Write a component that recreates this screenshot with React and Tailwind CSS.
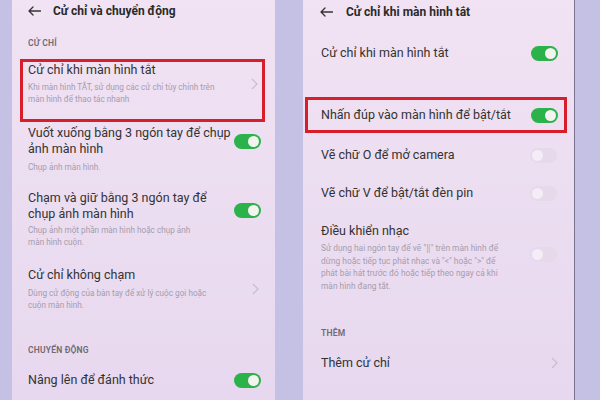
import React from "react";

const font = { fontFamily: "Roboto, 'Noto Sans', sans-serif" };

function Toggle({ on = true }) {
  return on ? (
    <div className="w-[27px] h-[15px] rounded-full bg-[#2bb24a] flex items-center justify-end pr-[2px] shrink-0">
      <div className="w-[11px] h-[11px] rounded-full bg-[#f3f3f0]" />
    </div>
  ) : (
    <div className="w-[27px] h-[15px] rounded-full bg-[#e6d9ea] flex items-center justify-start pl-[2px] shrink-0">
      <div className="w-[11px] h-[11px] rounded-full bg-[#f4ecf6]" />
    </div>
  );
}

function Chevron() {
  return (
    <svg width="7" height="12" viewBox="0 0 7 12" className="shrink-0">
      <path d="M1 1 L6 6 L1 11" fill="none" stroke="#c9bccd" strokeWidth="1.2" />
    </svg>
  );
}

function Arrow() {
  return (
    <svg width="13" height="10" viewBox="0 0 13 10">
      <path d="M12.5 5 H1 M5 1 L1 5 L5 9" fill="none" stroke="#333" strokeWidth="1.3" strokeLinecap="round" strokeLinejoin="round" />
    </svg>
  );
}

const main = "text-[12.5px] leading-[16px] whitespace-nowrap";
const sub = "text-[8.2px] leading-[12px] text-[#a69cad] whitespace-nowrap";
const label = "h-[12px] leading-[12px] text-[8.5px] text-[#6f6a72] font-semibold tracking-[0.2px]";

export default function App() {
  return (
    <div className="w-[600px] h-[400px] bg-[#c5c1e4] flex overflow-hidden text-[#333]" style={font}>
      {/* Left panel */}
      <div className="ml-[12px] w-[263px] h-full bg-gradient-to-b from-[#f1e3f3] to-[#e7d8ef] flex flex-col">
        <div className="h-[22px] flex items-center pl-[16px]">
          <Arrow />
          <span className="ml-[12px] text-[12px] font-bold text-[#2a2a2a]">Cử chỉ và chuyển động</span>
        </div>
        <div className={`mt-[15px] pl-[16px] ${label}`}>CỬ CHỈ</div>
        <div className="mt-[10px] ml-[8px] mr-[10px] border-[3px] border-[#d81e2a] pl-[5px] pr-[4px] pb-[14px] flex items-center">
          <div className="flex-1">
            <div className={main}>Cử chỉ khi màn hình tắt</div>
            <div className={`mt-[3px] ${sub}`}>
              Khi màn hình TẮT, sử dụng các cử chỉ tùy chỉnh trên<br />màn hình để thao tác nhanh
            </div>
          </div>
          <Chevron />
        </div>
        <div className="mt-[3px] pl-[16px] pr-[14px] flex items-center">
          <div className="flex-1">
            <div className={main}>Vuốt xuống bằng 3 ngón tay để chụp<br />ảnh màn hình</div>
            <div className={`mt-[4px] ${sub}`}>Chụp ảnh màn hình.</div>
          </div>
          <div className="mb-[16px]"><Toggle /></div>
        </div>
        <div className="mt-[17px] pl-[16px] pr-[14px] flex items-center">
          <div className="flex-1">
            <div className={main}>Chạm và giữ bằng 3 ngón tay để<br />chụp ảnh màn hình</div>
            <div className={`mt-[2px] ${sub}`}>Chụp ảnh một phần màn hình hoặc chụp ảnh<br />màn hình cuộn.</div>
          </div>
          <div className="mb-[18px]"><Toggle /></div>
        </div>
        <div className="mt-[19px] pl-[16px] pr-[16px] flex items-center">
          <div className="flex-1">
            <div className={main}>Cử chỉ không chạm</div>
            <div className={`mt-[4px] ${sub}`}>Dùng cử động của bàn tay để xử lý cuộc gọi hoặc<br />cuộn màn hình.</div>
          </div>
          <Chevron />
        </div>
        <div className={`mt-[33px] pl-[16px] ${label}`}>CHUYỂN ĐỘNG</div>
        <div className="mt-[16px] pl-[16px] pr-[14px] flex items-center">
          <div className={`flex-1 ${main}`}>Nâng lên để đánh thức</div>
          <Toggle />
        </div>
      </div>

      {/* Right panel */}
      <div className="ml-[28px] w-[272px] h-full bg-gradient-to-b from-[#f1e3f3] to-[#e7d8ef] flex flex-col border-r border-[#7a7490]">
        <div className="h-[24px] flex items-center pl-[17px]">
          <Arrow />
          <span className="ml-[13px] text-[12px] font-bold text-[#2a2a2a]">Cử chỉ khi màn hình tắt</span>
        </div>
        <div className="mt-[21px] pl-[18px] pr-[16px] h-[16px] flex items-center">
          <div className={`flex-1 ${main}`}>Cử chỉ khi màn hình tắt</div>
          <Toggle />
        </div>
        <div className="mt-[36px] ml-[2px] mr-[7px] border-[3px] border-[#d81e2a] h-[36px] pl-[13px] pr-[6px] flex items-center">
          <div className={`flex-1 ${main}`}>Nhấn đúp vào màn hình để bật/tắt</div>
          <Toggle />
        </div>
        <div className="mt-[14px] pl-[18px] pr-[17px] h-[16px] flex items-center">
          <div className={`flex-1 ${main}`}>Vẽ chữ O để mở camera</div>
          <Toggle on={false} />
        </div>
        <div className="mt-[22px] pl-[18px] pr-[17px] h-[16px] flex items-center">
          <div className={`flex-1 ${main}`}>Vẽ chữ V để bật/tắt đèn pin</div>
          <Toggle on={false} />
        </div>
        <div className="mt-[22px] pl-[18px] pr-[17px] flex items-center">
          <div className="flex-1">
            <div className={main}>Điều khiển nhạc</div>
            <div className="mt-[3px] text-[8.4px] leading-[12.7px] text-[#a69cad] whitespace-nowrap">
              Sử dụng hai ngón tay để vẽ "‖" trên màn hình để<br />dừng hoặc tiếp tục phát nhạc và "&lt;" hoặc "&gt;" để<br />phát bài hát trước đó hoặc tiếp theo ngay cả khi<br />màn hình đang tắt.
            </div>
          </div>
          <div className="mb-[6px]"><Toggle on={false} /></div>
        </div>
        <div className={`mt-[34px] pl-[18px] ${label}`}>THÊM</div>
        <div className="mt-[16px] pl-[18px] pr-[16px] h-[16px] flex items-center">
          <div className={`flex-1 ${main}`}>Thêm cử chỉ</div>
          <Chevron />
        </div>
      </div>
    </div>
  );
}
